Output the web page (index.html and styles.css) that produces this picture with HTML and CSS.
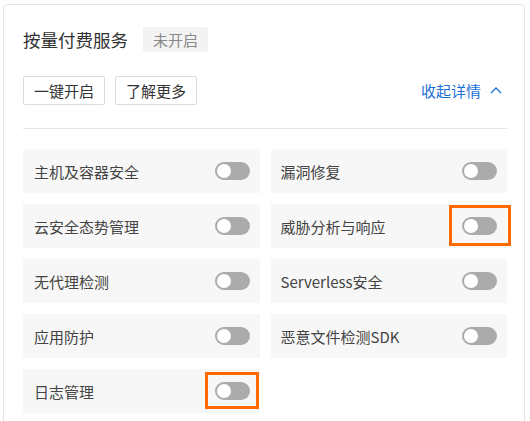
FILE: index.html
```html
<!DOCTYPE html>
<html lang="zh-CN">
<head>
<meta charset="utf-8">
<link rel="stylesheet" href="styles.css">
</head>
<body>
<div class="card">
  <div class="title-row">
    <span class="title">按量付费服务</span>
    <span class="badge">未开启</span>
  </div>
  <div class="action-row">
    <button class="btn">一键开启</button>
    <button class="btn">了解更多</button>
    <a class="collapse">收起详情
      <svg class="chev" width="12" height="8" viewBox="0 0 12 8"><polyline points="1,7 6,2 11,7" fill="none" stroke="#1b6fd6" stroke-width="1.4"/></svg>
    </a>
  </div>
  <div class="divider"></div>
  <div class="grid">
    <div class="item"><span class="label">主机及容器安全</span><span class="switch"></span></div>
    <div class="item"><span class="label">漏洞修复</span><span class="switch"></span></div>
    <div class="item"><span class="label">云安全态势管理</span><span class="switch"></span></div>
    <div class="item"><span class="label">威胁分析与响应</span><span class="switch"><span class="mark mark-a"></span></span></div>
    <div class="item"><span class="label">无代理检测</span><span class="switch"></span></div>
    <div class="item"><span class="label">Serverless安全</span><span class="switch"></span></div>
    <div class="item"><span class="label">应用防护</span><span class="switch"></span></div>
    <div class="item"><span class="label">恶意文件检测SDK</span><span class="switch"></span></div>
    <div class="item"><span class="label">日志管理</span><span class="switch"><span class="mark mark-b"></span></span></div>
  </div>
</div>
</body>
</html>
```

FILE: styles.css
```css
* { box-sizing: border-box; }
html, body {
  margin: 0;
  padding: 0;
  background: #fff;
  overflow: hidden;
  height: 421px;
}
body {
  font-family: "Noto Sans CJK SC", "Noto Sans", sans-serif;
  color: #333;
}
.card {
  margin: 4px 5px 0 3px;
  border: 1px solid #e3e3e3;
  border-bottom: none;
  border-radius: 5px 5px 0 0;
  padding: 22px 17px 0 19px;
  height: 417px;
}
.title-row {
  display: flex;
  align-items: center;
  height: 25px;
}
.title {
  font-size: 17.5px;
  line-height: 25px;
  color: #333;
}
.badge {
  margin-left: 15px;
  height: 25px;
  line-height: 25px;
  padding: 0 10px;
  font-size: 15px;
  color: #888;
  background: #f3f3f3;
  border-radius: 2px;
}
.action-row {
  display: flex;
  align-items: center;
  margin-top: 24px;
  gap: 10px;
  height: 29px;
}
.btn {
  height: 29px;
  padding: 0 10px;
  border: 1px solid #dcdcdc;
  border-radius: 2px;
  background: #fff;
  font-family: inherit;
  font-size: 15px;
  line-height: 27px;
  color: #333;
}
.collapse {
  margin-left: auto;
  margin-right: 5px;
  display: flex;
  align-items: center;
  gap: 9px;
  font-size: 15px;
  color: #1b6fd6;
}
.chev { margin-top: -2px; }
.divider {
  margin-top: 23px;
  height: 1px;
  background: #e5e5e5;
}
.grid {
  margin-top: 20px;
  display: grid;
  grid-template-columns: 1fr 1fr;
  gap: 11px;
}
.item {
  height: 44px;
  background: #f7f7f7;
  display: flex;
  align-items: center;
  justify-content: space-between;
  padding: 0 10px 0 11px;
}
.item:nth-child(even) { padding-left: 10px; }
.label {
  font-size: 15px;
  color: #444;
}
.switch {
  position: relative;
  width: 35px;
  height: 18px;
  border-radius: 9px;
  background: #ababab;
}
.switch::before {
  content: "";
  position: absolute;
  left: 2px;
  top: 2px;
  width: 14px;
  height: 14px;
  border-radius: 50%;
  background: #fff;
}
.mark {
  position: absolute;
  border: 3px solid #ff6a00;
}
.mark-a { left: -13px; right: -14px; top: -12px; bottom: -11px; }
.mark-b { left: -10px; right: -9px; top: -10px; bottom: -9px; }
```
